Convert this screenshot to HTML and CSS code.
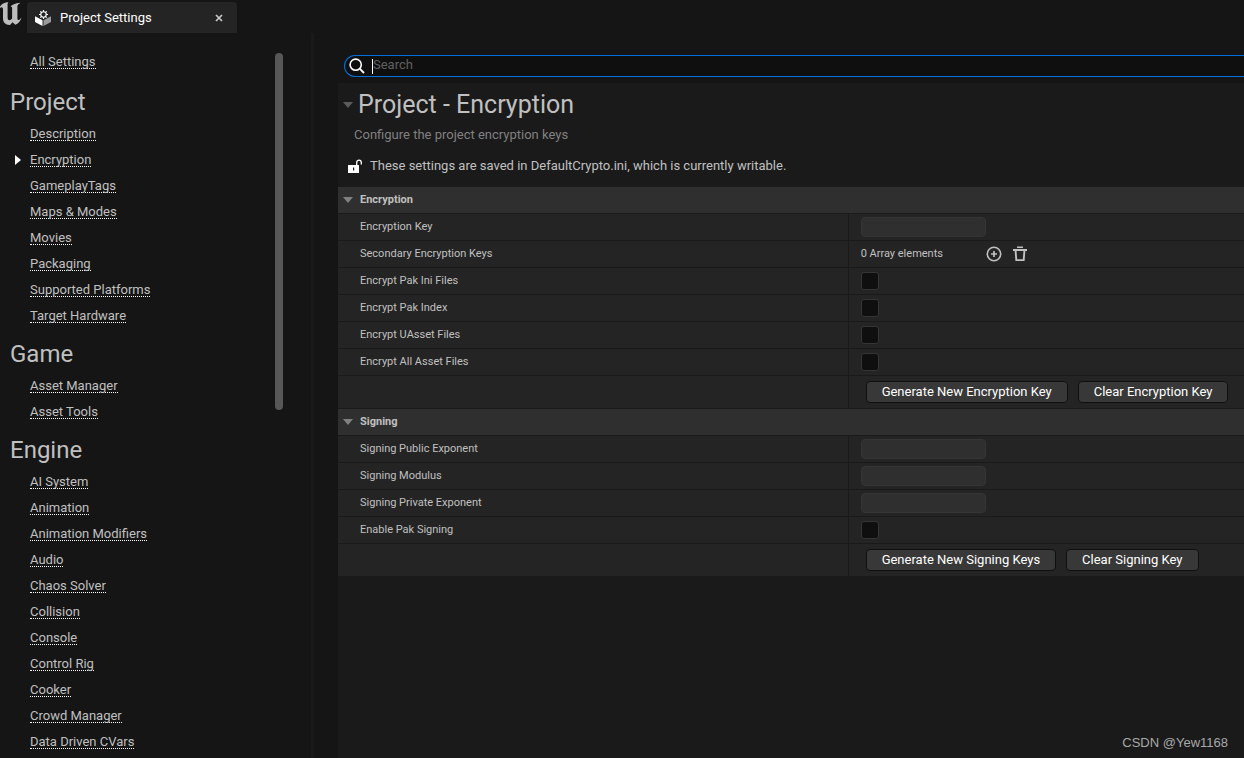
FILE: index.html
```html
<!DOCTYPE html>
<html lang="en">
<head>
<meta charset="utf-8">
<title>Project Settings</title>
<link rel="stylesheet" href="styles.css">
</head>
<body>
<div class="app">
  <header class="tabbar">
    <svg class="logo" width="24" height="26" viewBox="0 0 24 26" aria-hidden="true"><path d="M0 6.500 C2 3.800 5 2.300 8.600 2.100 C7.700 2.900 7.600 3.600 7.600 4.800 V17.300 C7.600 19.200 8.300 20.200 9.500 20.200 C10.600 20.200 11.600 19.400 12.100 18.600 V8 C12.100 7.200 11.300 6.700 10.500 6.900 C12 4.600 15 3.300 20.500 2.800 C18.500 4 17.400 5 17.400 6.500 V18.300 C17.400 19.600 17.900 20.200 18.600 20 C19.700 19.700 20.700 18.500 21.600 17.200 C20.800 20.700 18.300 23.600 15.200 24.800 L12.600 22.300 L10 25 C5.500 25.200 3 22.400 3 18.600 V9.500 C3 7.400 1.700 6.800 0 7.900 Z" fill="#bdbdbd"/></svg>
    <div class="tab">
      <svg width="16" height="16" viewBox="0 0 16 16" aria-hidden="true"><path d="M0 6.300 L7.500 10.300 V16 L0 12 Z" fill="#fff"/><path d="M16 6.300 L8.500 10.300 V16 L16 12 Z" fill="#9a9a9a"/><circle cx="8.500" cy="4.500" r="4" fill="#242424"/><circle cx="8.500" cy="4.500" r="2.700" fill="#242424" stroke="#fff" stroke-width="1.100"/><path d="M8.500 0 V1.800 M8.500 7.200 V9 M4 4.500 H5.800 M11.200 4.500 H13 M5.300 1.300 L6.600 2.600 M11.700 1.300 L10.400 2.600 M5.300 7.700 L6.600 6.400 M11.700 7.700 L10.400 6.400" stroke="#fff" stroke-width="1.100"/></svg>
      <span class="tab-title">Project Settings</span>
      <button class="tab-close" aria-label="Close tab"><svg width="8" height="8" viewBox="0 0 8 8"><path d="M1 1 L7 7 M7 1 L1 7" stroke="#c8c8c8" stroke-width="1.700"/></svg></button>
    </div>
  </header>
  <div class="body">
    <aside class="sidebar">
      <nav class="nav">
        <ul class="list all"><li><a href="#">All Settings</a></li></ul>
        <h2>Project</h2>
        <ul class="list">
          <li><a href="#">Description</a></li>
          <li class="current"><a href="#" aria-current="page">Encryption</a></li>
          <li><a href="#">GameplayTags</a></li>
          <li><a href="#">Maps &amp; Modes</a></li>
          <li><a href="#">Movies</a></li>
          <li><a href="#">Packaging</a></li>
          <li><a href="#">Supported Platforms</a></li>
          <li><a href="#">Target Hardware</a></li>
        </ul>
        <h2>Game</h2>
        <ul class="list">
          <li><a href="#">Asset Manager</a></li>
          <li><a href="#">Asset Tools</a></li>
        </ul>
        <h2>Engine</h2>
        <ul class="list">
          <li><a href="#">AI System</a></li>
          <li><a href="#">Animation</a></li>
          <li><a href="#">Animation Modifiers</a></li>
          <li><a href="#">Audio</a></li>
          <li><a href="#">Chaos Solver</a></li>
          <li><a href="#">Collision</a></li>
          <li><a href="#">Console</a></li>
          <li><a href="#">Control Rig</a></li>
          <li><a href="#">Cooker</a></li>
          <li><a href="#">Crowd Manager</a></li>
          <li><a href="#">Data Driven CVars</a></li>
        </ul>
      </nav>
      <div class="track"><div class="thumb"></div></div>
    </aside>
    <main class="main">
      <div class="search">
        <svg width="16" height="16" viewBox="0 0 16 16" aria-hidden="true"><circle cx="6.700" cy="6.700" r="5.600" fill="none" stroke="#fff" stroke-width="1.600"/><path d="M10.700 10.700 L15 15" stroke="#fff" stroke-width="1.800"/></svg>
        <span class="caret"></span>
        <input type="text" placeholder="Search" aria-label="Search">
      </div>
      <div class="panel">
        <div class="title">
          <svg class="arrow dim" width="10" height="6" viewBox="0 0 10 6" aria-hidden="true"><path d="M0 0 H10 L5 6 Z"/></svg>
          <h1>Project - Encryption</h1>
        </div>
        <p class="desc">Configure the project encryption keys</p>
        <p class="notice"><svg width="15" height="15" viewBox="0 0 15 15" aria-hidden="true"><path d="M8.700 6 V3.700 C8.700 0.200 13.300 0.200 13.300 3.700 V5.500" fill="none" stroke="#fff" stroke-width="1.300"/><path fill-rule="evenodd" d="M0.500 6 H10.500 Q11 6 11 6.500 V13.500 Q11 14 10.500 14 H0.500 Q0 14 0 13.500 V6.500 Q0 6 0.500 6 Z M5 8.500 V11.500 H6.200 V8.500 Z" fill="#fff"/></svg>These settings are saved in DefaultCrypto.ini, which is currently writable.</p>

        <section>
          <h3><svg class="arrow" width="10" height="6" viewBox="0 0 10 6" aria-hidden="true"><path d="M0 0 H10 L5 6 Z"/></svg>Encryption</h3>
          <div class="row"><label for="key">Encryption Key</label><div class="value"><input class="text" id="key" type="text"></div></div>
          <div class="row"><span class="name">Secondary Encryption Keys</span><div class="value"><span class="count">0 Array elements</span>
            <button class="icon" aria-label="Add element"><svg width="16" height="16" viewBox="0 0 16 16"><circle cx="8" cy="8" r="6.700" fill="none" stroke="#c0c0c0" stroke-width="1.600"/><path d="M8 5 V11 M5 8 H11" stroke="#c0c0c0" stroke-width="1.700"/></svg></button>
            <button class="icon" aria-label="Remove all elements"><svg width="16" height="16" viewBox="0 0 16 16"><path d="M5 0.500 H11 V2 H5 Z M1 3 H15 V5 H1 Z" fill="#c0c0c0"/><path d="M3.600 5 L4.300 14.100 H11.700 L12.400 5" fill="none" stroke="#c0c0c0" stroke-width="1.900"/></svg></button></div></div>
          <div class="row"><label for="ini">Encrypt Pak Ini Files</label><div class="value"><input class="check" id="ini" type="checkbox"></div></div>
          <div class="row"><label for="index">Encrypt Pak Index</label><div class="value"><input class="check" id="index" type="checkbox"></div></div>
          <div class="row"><label for="uasset">Encrypt UAsset Files</label><div class="value"><input class="check" id="uasset" type="checkbox"></div></div>
          <div class="row"><label for="all">Encrypt All Asset Files</label><div class="value"><input class="check" id="all" type="checkbox"></div></div>
          <div class="row actions"><span></span><div class="value"><button class="btn">Generate New Encryption Key</button><button class="btn">Clear Encryption Key</button></div></div>
        </section>
        <section>
          <h3><svg class="arrow" width="10" height="6" viewBox="0 0 10 6" aria-hidden="true"><path d="M0 0 H10 L5 6 Z"/></svg>Signing</h3>
          <div class="row"><label for="pub">Signing Public Exponent</label><div class="value"><input class="text" id="pub" type="text"></div></div>
          <div class="row"><label for="mod">Signing Modulus</label><div class="value"><input class="text" id="mod" type="text"></div></div>
          <div class="row"><label for="priv">Signing Private Exponent</label><div class="value"><input class="text" id="priv" type="text"></div></div>
          <div class="row"><label for="sign">Enable Pak Signing</label><div class="value"><input class="check" id="sign" type="checkbox"></div></div>
          <div class="row actions"><span></span><div class="value"><button class="btn">Generate New Signing Keys</button><button class="btn">Clear Signing Key</button></div></div>
        </section>
        <div class="credit">CSDN @Yew1168</div>
      </div>
    </main>
  </div>
</div>
</body>
</html>
```
FILE: styles.css
```css
* { box-sizing: border-box; }
body {
  margin: 0;
  background: #151515;
  color: #c0c0c0;
  font: 13px/16px Roboto, "Liberation Sans", sans-serif;
}
h1, h2, h3, p, ul { margin: 0; padding: 0; font-weight: 400; }
ul { list-style: none; }
button, input { font: inherit; margin: 0; }
svg { flex: none; display: block; }

.app { display: flex; flex-direction: column; height: 100vh; overflow: hidden; }

.tabbar { display: flex; height: 33px; flex: none; }
.logo { margin-right: 3px; }
.tab {
  display: flex;
  align-items: center;
  gap: 9px;
  width: 210px;
  margin-top: 2px;
  padding: 0 13px 0 8px;
  background: #242424;
  border-radius: 4px 4px 0 0;
  color: #fff;
}
.tab-title { flex: 1; }
.tab-close { padding: 1px; border: 0; background: none; }

.body { display: flex; flex: 1; min-height: 0; }

.sidebar {
  display: flex;
  flex: none;
  width: 314px;
  border-right: 3px solid #1a1a1a;
  overflow: hidden;
}
.nav { flex: 1; padding-top: 16px; }
.nav h2 { height: 44px; padding: 9px 10px 0; font-size: 24px; line-height: 32px; }
.list li { display: flex; align-items: center; height: 26px; padding-left: 30px; }
.list.all { margin-bottom: 2px; }
.list a {
  height: 14px;
  line-height: 13px;
  color: #c0c0c0;
  text-decoration: none;
  border-bottom: 1px dotted #fff;
}
.list .current { padding-left: 15px; }
.current::before {
  content: "";
  margin-right: 9px;
  border: 5px solid transparent;
  border-left: 6px solid #fff;
  border-right: 0;
}
.track { width: 8px; margin: 20px 28px 5px 0; }
.thumb { height: 51%; border-radius: 4px; background: #575757; }

.main { display: flex; flex-direction: column; flex: 1; min-width: 0; padding: 22px 0 0 24px; }
.search {
  display: flex;
  align-items: center;
  flex: none;
  height: 22px;
  margin-left: 6px;
  padding-left: 4px;
  background: #0f0f0f;
  border: 1px solid #0070e0;
  border-right: 0;
  border-radius: 11px 0 0 11px;
}
.caret { width: 1px; height: 15px; margin-left: 7px; background: #fff; }
.search input {
  flex: 1;
  min-width: 0;
  height: 20px;
  padding: 0 0 4px;
  border: 0;
  outline: 0;
  background: none;
  color: #c0c0c0;
}
.search input::placeholder { color: #606060; }

.panel {
  display: flex;
  flex-direction: column;
  flex: 1;
  margin-top: 6px;
  background: #1a1a1a;
}
.title { display: flex; align-items: center; gap: 5px; height: 44px; padding-left: 5px; }
.title h1 { font-size: 25px; line-height: 32px; }
.arrow { fill: #808080; }
.arrow.dim { fill: #5c5c5c; }
.desc { padding: 0 16px; color: #808080; }
.notice { display: flex; align-items: center; gap: 7px; padding: 15px 10px 13px; }

section { font-size: 11px; background: #242424; }
section h3 {
  display: flex;
  align-items: center;
  gap: 7px;
  height: 27px;
  padding-left: 5px;
  background: #2f2f2f;
  border-bottom: 1px solid #1a1a1a;
  font-size: 11px;
  font-weight: 700;
}
.row {
  display: grid;
  grid-template-columns: 9fr 7fr;
  height: 27px;
  border-bottom: 1px solid #1a1a1a;
}
.row label, .row .name { padding: 5px 0 0 22px; }
.value { display: flex; align-items: center; padding-left: 12px; border-left: 1px solid #1a1a1a; }
.text {
  width: 125px;
  height: 20px;
  padding: 0 6px;
  background: #2f2f2f;
  border: 1px solid #353535;
  border-radius: 4px;
  color: #c0c0c0;
}
.check {
  appearance: none;
  width: 18px;
  height: 18px;
  background: #0f0f0f;
  border: 1px solid #353535;
  border-radius: 3px;
}
.count { width: 125px; }
.icon { width: 16px; height: 16px; margin-right: 10px; padding: 0; border: 0; background: none; }
.actions { height: 33px; }
.actions .value { gap: 10px; padding-left: 17px; }
.btn {
  height: 22px;
  padding: 0 15px;
  background: #383838;
  border: 1px solid #0f0f0f;
  border-radius: 4px;
  color: #fff;
  font-size: 13px;
  white-space: nowrap;
}
.credit {
  margin-top: auto;
  padding: 0 16px 7px;
  text-align: right;
  font-family: "Liberation Sans", sans-serif;
  color: #a8a8a8;
}
```
